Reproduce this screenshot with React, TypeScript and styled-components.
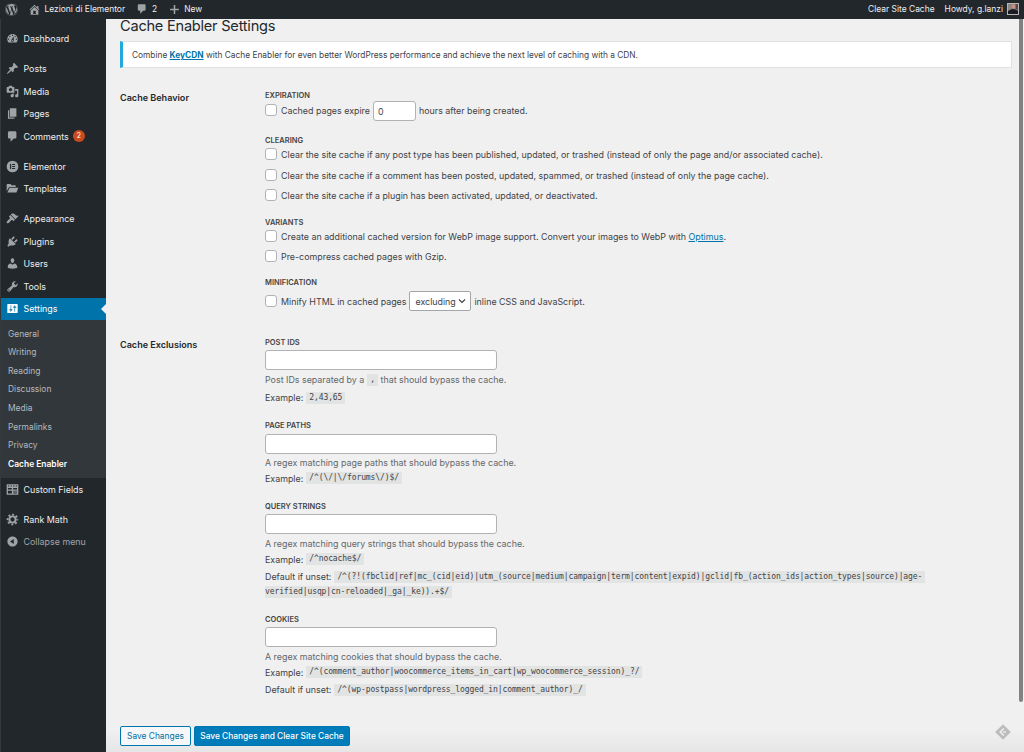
import React from "react";
import styled, { createGlobalStyle, css } from "styled-components";
import { FaWordpress } from "react-icons/fa";

const Global = createGlobalStyle`
  * { box-sizing: border-box; }
  body { margin: 0; background: #f0f0f0; overflow: hidden; }
  #root { height: 752px; }
`;

const Screen = styled.div`
  height: 752px;
  display: flex;
  flex-direction: column;
  overflow: hidden;
  position: relative;
  font-family: Inter, "Liberation Sans", sans-serif;
  font-size: 8.9px;
  color: #3f4246;
  background: #f0f0f0;
  white-space: nowrap;
`;

const AdminBar = styled.header`
  height: 19px;
  flex: none;
  display: flex;
  align-items: center;
  padding: 0 5px 1px 4px;
  background: #22272b;
  color: #eee;
  font-size: 8.45px;
`;

const BarItem = styled.div<{ $ml?: number }>`
  display: flex;
  align-items: center;
  margin-left: ${(p) => p.$ml ?? 0}px;
`;

const Spacer = styled.div`
  flex: 1;
`;

const Avatar = styled.svg`
  display: block;
  width: 12px;
  height: 12px;
  margin-left: 4px;
`;

const Body = styled.div`
  flex: 1;
  display: flex;
  min-height: 0;
`;

const Sidebar = styled.nav`
  width: 106px;
  flex: none;
  padding-top: 8.2px;
  background: #22272b;
  border-left: 1px solid #34393d;
  color: #eee;
`;

const MenuItem = styled.div<{ $gap?: number; $active?: boolean; $muted?: boolean }>`
  position: relative;
  display: flex;
  align-items: center;
  height: 22.6px;
  margin-top: ${(p) => p.$gap ?? 0}px;
  padding-left: 4.5px;
  ${(p) => p.$muted && css`color: #a0a5aa;`}
  ${(p) =>
    p.$active &&
    css`
      background: #0073aa;
      color: #fff;
      &::after {
        content: "";
        position: absolute;
        right: 0;
        top: 6px;
        border: 5.5px solid transparent;
        border-left-width: 0;
        border-right-color: #f0f0f0;
      }
    `}
`;

const IconBox = styled.span<{ $w: number; $light?: boolean; $mr?: number }>`
  display: flex;
  justify-content: center;
  width: ${(p) => p.$w}px;
  margin-right: ${(p) => p.$mr ?? 5}px;
  color: ${(p) => (p.$light ? "#fff" : "#9ea3a8")};
  svg { display: block; }
`;

const Badge = styled.span`
  margin-left: 4px;
  width: 12px;
  height: 12px;
  border-radius: 6px;
  background: #ca4a1f;
  color: #fff;
  font-size: 7px;
  line-height: 12px;
  text-align: center;
`;

const SubMenu = styled.div`
  height: 157.5px;
  padding: 4.6px 0 0 7px;
  background: #32373c;
`;

const SubItem = styled.div<{ $current?: boolean }>`
  height: 18.6px;
  line-height: 18.6px;
  font-size: 8.45px;
  color: ${(p) => (p.$current ? "#fff" : "#b4b9be")};
  font-weight: ${(p) => (p.$current ? 600 : 400)};
`;

const Content = styled.main`
  flex: 1;
  padding: 0 12px 0 14px;
  background: linear-gradient(#f0f0f0 0 710px, #e6e6e6 733px);
`;

const PageTitle = styled.h1`
  margin: 0;
  height: 16px;
  line-height: 15px;
  font-size: 14.6px;
  font-weight: 400;
  letter-spacing: -0.24px;
  color: #23282d;
`;

const Notice = styled.div`
  height: 27px;
  margin-top: 6px;
  padding-left: 9px;
  line-height: 26px;
  background: #fff;
  border: 1px solid #dfe1e3;
  border-left: 3px solid #22a8dc;
  font-size: 8.34px;
`;

const Link = styled.a<{ $bold?: boolean }>`
  color: #0073aa;
  text-decoration: underline;
  font-weight: ${(p) => (p.$bold ? 700 : 400)};
`;

const Section = styled.section<{ $mt: number }>`
  display: grid;
  grid-template-columns: 145px 1fr;
  margin-top: ${(p) => p.$mt}px;
`;

const SectionLabel = styled.div`
  height: 16px;
  line-height: 16px;
  font-size: 9.05px;
  font-weight: 600;
  color: #23282d;
`;

const Group = styled.div<{ $mt?: number }>`
  margin-top: ${(p) => p.$mt ?? 0}px;
`;

const GroupTitle = styled.div<{ $mb?: number }>`
  height: 11px;
  line-height: 11px;
  font-size: 7.5px;
  font-weight: 600;
  color: #444;
  margin-bottom: ${(p) => p.$mb ?? 0}px;
`;

const Line = styled.div<{ $h?: number; $desc?: boolean }>`
  display: flex;
  align-items: center;
  height: ${(p) => p.$h ?? 20}px;
  color: ${(p) => (p.$desc ? "#63676b" : "#3f4246")};
`;

const CheckBox = styled.span`
  width: 12px;
  height: 12px;
  flex: none;
  margin: -1px 4px 0 0;
  border: 1px solid #b0b2b4;
  border-radius: 3px;
  background: #fff;
`;

const NumberField = styled.span`
  width: 43px;
  height: 20px;
  margin: 0 3px;
  padding-left: 4px;
  line-height: 19px;
  border: 1px solid #b0b2b4;
  border-radius: 3px;
  background: #fff;
`;

const SelectField = styled.span`
  display: flex;
  align-items: center;
  justify-content: space-between;
  width: 62px;
  height: 20px;
  margin: 0 3px;
  padding: 0 4px 0 5px;
  border: 1px solid #a3a5a8;
  border-radius: 2px;
  background: #fff;
`;

const TextField = styled.div`
  width: 232px;
  height: 20px;
  border: 1px solid #b0b2b4;
  border-radius: 3px;
  background: #fff;
`;

const Code = styled.code<{ $wrapped?: boolean }>`
  display: inline-block;
  height: 12px;
  line-height: 12px;
  margin-left: ${(p) => (p.$wrapped ? 0 : 3)}px;
  padding: 0 3px 0 ${(p) => (p.$wrapped ? 0 : 3)}px;
  background: #e2e3e3;
  font-family: "DejaVu Sans Mono", monospace;
  font-size: 8px;
  letter-spacing: -0.1px;
  color: #3f4246;
`;

const Actions = styled.div`
  display: flex;
  gap: 3px;
  margin-top: 25px;
`;

const Button = styled.button<{ $primary?: boolean; $w: number }>`
  width: ${(p) => p.$w}px;
  height: 20px;
  padding: 0;
  font: inherit;
  font-size: 8.4px;
  font-weight: ${(p) => (p.$primary ? 500 : 400)};
  border-radius: 2px;
  border: 1px solid #0075b0;
  background: ${(p) => (p.$primary ? "#007cba" : "#f5f7f8")};
  color: ${(p) => (p.$primary ? "#fff" : "#0071a1")};
`;

const ScrollThumb = styled.div`
  position: absolute;
  right: 1px;
  top: 19px;
  width: 4px;
  height: 683px;
  border-radius: 0 0 2px 2px;
  background: #828282;
`;

const FloatingMark = styled.svg`
  position: absolute;
  left: 995px;
  top: 724px;
  width: 16px;
  height: 16px;
`;

const paths: Record<string, string> = {
  home: "M16 8.5l1.53 1.53-1.06 1.06L10 4.6l-6.47 6.49-1.06-1.06L10 2.5l4 4v-2h2v4zm-6-2.46l6 5.99V18H4v-5.97zM12 17v-5H8v5h4z",
  dashboard:
    "M3.76 16h12.48c1.1-1.37 1.76-3.11 1.76-5 0-4.42-3.58-8-8-8s-8 3.58-8 8c0 1.89.66 3.63 1.76 5zM10 4c.55 0 1 .45 1 1s-.45 1-1 1-1-.45-1-1 .45-1 1-1zM6 6c.55 0 1 .45 1 1s-.45 1-1 1-1-.45-1-1 .45-1 1-1zm8 0c.55 0 1 .45 1 1s-.45 1-1 1-1-.45-1-1 .45-1 1-1zm-5.37 5.55L12 7v6c0 1.1-.9 2-2 2s-2-.9-2-2c0-.57.24-1.08.63-1.45zM4 10c.55 0 1 .45 1 1s-.45 1-1 1-1-.45-1-1 .45-1 1-1zm12 0c.55 0 1 .45 1 1s-.45 1-1 1-1-.45-1-1 .45-1 1-1zm-5 3c0-.55-.45-1-1-1s-1 .45-1 1 .45 1 1 1 1-.45 1-1z",
  pin: "M10.44 3.02l1.82-1.82 6.36 6.35-1.83 1.82c-1.05-.68-2.48-.57-3.41.36l-.75.75c-.92.93-1.04 2.35-.35 3.41l-1.83 1.82-2.41-2.41-2.8 2.79c-.42.42-3.38 2.71-3.8 2.29s1.86-3.39 2.28-3.81l2.79-2.79L4.1 9.36l1.83-1.82c1.05.69 2.48.57 3.4-.36l.75-.75c.93-.92 1.05-2.35.36-3.41z",
  media:
    "M13 11V4c0-.55-.45-1-1-1h-1.67L9 1H5L3.67 3H2c-.55 0-1 .45-1 1v7c0 .55.45 1 1 1h10c.55 0 1-.45 1-1zM7 4.5c1.38 0 2.5 1.12 2.5 2.5S8.38 9.5 7 9.5 4.5 8.38 4.5 7 5.62 4.5 7 4.5zM14 6h5v10.5c0 1.38-1.12 2.5-2.5 2.5S14 17.88 14 16.5s1.12-2.5 2.5-2.5c.17 0 .34.02.5.05V9h-3V6zm-4 8.05V13h2v3.5c0 1.38-1.12 2.5-2.5 2.5S7 17.88 7 16.5 8.12 14 9.5 14c.17 0 .34.02.5.05z",
  pages: "M6 15V2h10v13H6zm-1 1h8v2H3V5h2v11z",
  comments: "M5 2h9c1.1 0 2 .9 2 2v7c0 1.1-.9 2-2 2h-2l-5 5v-5H5c-1.1 0-2-.9-2-2V4c0-1.1.9-2 2-2z",
  elementor: "M10 1a9 9 0 1 0 0 18a9 9 0 1 0 0-18zM6.2 6h1.7v8H6.2zM9.4 6h4.5v1.6H9.4zM9.4 9.2h4.5v1.6H9.4zM9.4 12.4h4.5V14H9.4z",
  templates: "M1 14V4.5C1 3.7 1.5 3 2.3 3H7l1.5 2H14c.6 0 1 .4 1 1v1.5H5zM2 16l3.6-7.3H19L16 16z",
  appearance:
    "M14.48 11.06L7.41 3.99l1.5-1.5c.5-.56 2.3-.47 3.51.32 1.21.8 1.43 1.28 2.91 2.1 1.18.64 2.45 1.26 4.45.85zm-.71.71L6.7 4.7 4.93 6.47c-.39.39-.39 1.02 0 1.41l1.06 1.06c.39.39.39 1.03 0 1.42-.6.6-1.43 1.11-2.21 1.69-.35.26-.7.53-1.01.84C1.43 14.23.4 16.08 1.4 17.07c.99 1 2.84-.03 4.18-1.36.31-.31.58-.66.85-1.02.57-.78 1.08-1.61 1.69-2.21.39-.39 1.02-.39 1.41 0l1.06 1.06c.39.39 1.02.39 1.41 0z",
  plugins:
    "M13.11 4.36L9.87 7.6 8 5.73l3.24-3.24c.35-.34 1.05-.2 1.56.32.52.51.66 1.21.31 1.55zm-8 1.77l.91-1.12 9.01 9.01-1.19.84c-.71.71-2.63 1.16-3.82 1.16H6.14L4.9 17.26c-.59.59-1.54.59-2.12 0-.59-.58-.59-1.53 0-2.12l1.24-1.24v-3.88c0-1.13.4-3.19 1.09-3.89zm7.26 3.97l3.24-3.24c.34-.35 1.04-.21 1.55.31.52.51.66 1.21.31 1.55l-3.24 3.25z",
  users:
    "M10 9.25c-2.27 0-2.73-3.44-2.73-3.44C7 4.02 7.82 2 9.97 2c2.16 0 2.98 2.02 2.71 3.81 0 0-.41 3.44-2.68 3.44zm0 2.57L12.72 10c2.39 0 4.52 2.33 4.52 4.53v2.49s-3.65 1.13-7.24 1.13c-3.65 0-7.24-1.13-7.24-1.13v-2.49c0-2.25 1.94-4.48 4.47-4.48z",
  tools:
    "M16.68 9.77c-1.34 1.34-3.3 1.67-4.95.99l-5.41 6.52c-.99.99-2.59.99-3.58 0s-.99-2.59 0-3.57l6.52-5.42c-.68-1.65-.35-3.61.99-4.95 1.28-1.28 3.12-1.62 4.72-1.06l-2.89 2.89 2.82 2.82 2.86-2.87c.53 1.58.18 3.39-1.08 4.65zM3.81 16.21c.4.39 1.04.39 1.43 0 .4-.4.4-1.04 0-1.43-.39-.4-1.03-.4-1.43 0-.39.39-.39 1.03 0 1.43z",
  settings:
    "M18 16V4c0-.55-.45-1-1-1H3c-.55 0-1 .45-1 1v12c0 .55.45 1 1 1h14c.55 0 1-.45 1-1zM8 11h1c.55 0 1 .45 1 1s-.45 1-1 1H8v1.5c0 .28-.22.5-.5.5s-.5-.22-.5-.5V13H6c-.55 0-1-.45-1-1s.45-1 1-1h1V5.5c0-.28.22-.5.5-.5s.5.22.5.5V11zm5-2h-1c-.55 0-1-.45-1-1s.45-1 1-1h1V5.5c0-.28.22-.5.5-.5s.5.22.5.5V7h1c.55 0 1 .45 1 1s-.45 1-1 1h-1v5.5c0 .28-.22.5-.5.5s-.5-.22-.5-.5V9z",
  fields: "M1 2h18v16H1zM3 7.5V10h6V7.5zM11 7.5V10h6V7.5zM3 12v4h6V12zM11 12v1.2h6V12zM11 14.8V16h6v-1.2zM3 4v1.2h2V4zM7 4v1.2h2V4zM11 4v1.2h2V4zM15 4v1.2h2V4z",
  collapse: "M10 2.16c4.33 0 7.84 3.51 7.84 7.84s-3.51 7.84-7.84 7.84S2.16 14.33 2.16 10 5.71 2.16 10 2.16zm2 11.72V6.12L6.18 9.97z",
  plus: "M8.6 2h2.8v6.6H18v2.8h-6.6V18H8.6v-6.6H2V8.6h6.6z",
};

function Icon({ name, size = 14 }: { name: string; size?: number }) {
  if (name === "gear") {
    return (
      <svg width={size} height={size} viewBox="0 0 20 20" fill="none" stroke="currentColor">
        <circle cx="10" cy="10" r="4.8" strokeWidth="3" />
        <circle cx="10" cy="10" r="7.6" strokeWidth="2.8" strokeDasharray="3 2.969" strokeDashoffset="1.5" />
      </svg>
    );
  }
  return (
    <svg width={size} height={size} viewBox="0 0 20 20" fill="currentColor" fillRule="evenodd">
      <path d={paths[name]} />
    </svg>
  );
}

type Entry = { icon: string; label: string; gap?: number; badge?: string; active?: boolean; muted?: boolean };

const mainMenu: Entry[] = [
  { icon: "dashboard", label: "Dashboard" },
  { icon: "pin", label: "Posts", gap: 7.6 },
  { icon: "media", label: "Media" },
  { icon: "pages", label: "Pages" },
  { icon: "comments", label: "Comments", badge: "2" },
  { icon: "elementor", label: "Elementor", gap: 7 },
  { icon: "templates", label: "Templates" },
  { icon: "appearance", label: "Appearance", gap: 7.2 },
  { icon: "plugins", label: "Plugins" },
  { icon: "users", label: "Users" },
  { icon: "tools", label: "Tools" },
  { icon: "settings", label: "Settings", active: true },
];

const lowerMenu: Entry[] = [
  { icon: "fields", label: "Custom Fields", gap: 0.9 },
  { icon: "gear", label: "Rank Math", gap: 7.2 },
  { icon: "collapse", label: "Collapse menu", muted: true, gap: -0.9 },
];

const subMenu = ["General", "Writing", "Reading", "Discussion", "Media", "Permalinks", "Privacy", "Cache Enabler"];

function Entries({ items }: { items: Entry[] }) {
  return (
    <>
      {items.map((e) => (
        <MenuItem key={e.label} $gap={e.gap} $active={e.active} $muted={e.muted}>
          <IconBox $w={13} $light={e.active}>
            <Icon name={e.icon} size={13} />
          </IconBox>
          {e.label}
          {e.badge && <Badge>{e.badge}</Badge>}
        </MenuItem>
      ))}
    </>
  );
}

export default function App() {
  return (
    <Screen>
      <Global />
      <AdminBar>
        <IconBox $w={14} $mr={10}><FaWordpress size={13} /></IconBox>
        <IconBox $w={13} $mr={3.5}><Icon name="home" size={13} /></IconBox>
        <BarItem>Lezioni di Elementor</BarItem>
        <BarItem $ml={10}>
          <IconBox $w={13} $mr={4}><Icon name="comments" size={12} /></IconBox>2
        </BarItem>
        <BarItem $ml={11}>
          <IconBox $w={12} $mr={4}><Icon name="plus" size={11} /></IconBox>New
        </BarItem>
        <Spacer />
        <BarItem>Clear Site Cache</BarItem>
        <BarItem $ml={10}>
          Howdy, g.lanzi
          <Avatar viewBox="0 0 12 12">
            <rect width="12" height="12" fill="#b9b4b3" />
            <rect x="1" y="1" width="10" height="10" fill="#8c8583" />
            <path d="M1 11V8l4-2 4 .5L11 8v3z" fill="#1b1b22" />
            <circle cx="6.5" cy="3.6" r="2" fill="#c98f82" />
            <path d="M8.5 1H11v6L8.8 6z" fill="#55474a" />
          </Avatar>
        </BarItem>
      </AdminBar>
      <Body>
        <Sidebar>
          <Entries items={mainMenu} />
          <SubMenu>
            {subMenu.map((s) => (
              <SubItem key={s} $current={s === "Cache Enabler"}>{s}</SubItem>
            ))}
          </SubMenu>
          <Entries items={lowerMenu} />
        </Sidebar>
        <Content>
          <PageTitle>Cache Enabler Settings</PageTitle>
          <Notice>
            Combine <Link $bold>KeyCDN</Link> with Cache Enabler for even better WordPress performance and achieve the next level of caching with a CDN.
          </Notice>
          <Section $mt={22}>
            <SectionLabel>Cache Behavior</SectionLabel>
            <div>
              <Group>
                <GroupTitle $mb={-0.5}>EXPIRATION</GroupTitle>
                <Line>
                  <CheckBox />Cached pages expire<NumberField>0</NumberField>hours after being created.
                </Line>
              </Group>
              <Group $mt={14}>
                <GroupTitle $mb={-1}>CLEARING</GroupTitle>
                <Line $h={20.5}><CheckBox />Clear the site cache if any post type has been published, updated, or trashed (instead of only the page and/or associated cache).</Line>
                <Line $h={20.5}><CheckBox />Clear the site cache if a comment has been posted, updated, spammed, or trashed (instead of only the page cache).</Line>
                <Line $h={20.5}><CheckBox />Clear the site cache if a plugin has been activated, updated, or deactivated.</Line>
              </Group>
              <Group $mt={10.5}>
                <GroupTitle $mb={-1}>VARIANTS</GroupTitle>
                <Line>
                  <CheckBox />
                  <span>Create an additional cached version for WebP image support. Convert your images to WebP with <Link>Optimus</Link>.</span>
                </Line>
                <Line><CheckBox />Pre-compress cached pages with Gzip.</Line>
              </Group>
              <Group $mt={10.5}>
                <GroupTitle $mb={3}>MINIFICATION</GroupTitle>
                <Line>
                  <CheckBox />Minify HTML in cached pages
                  <SelectField>
                    excluding
                    <svg width="8" height="8" viewBox="0 0 8 8" fill="none" stroke="#444" strokeWidth="1.2"><path d="M1 2.5l3 3 3-3" /></svg>
                  </SelectField>
                  inline CSS and JavaScript.
                </Line>
              </Group>
            </div>
          </Section>
          <Section $mt={26}>
            <SectionLabel>Cache Exclusions</SectionLabel>
            <div>
              <Group>
                <GroupTitle $mb={2}>POST IDS</GroupTitle>
                <TextField />
                <Line $desc $h={19}>Post IDs separated by a<Code>,</Code>&nbsp;that should bypass the cache.</Line>
                <Line $h={17}>Example:<Code>2,43,65</Code></Line>
              </Group>
              <Group $mt={14}>
                <GroupTitle $mb={2.5}>PAGE PATHS</GroupTitle>
                <TextField />
                <Line $desc $h={18}>A regex matching page paths that should bypass the cache.</Line>
                <Line $h={13}>Example:<Code>{"/^(\\/|\\/forums\\/)$/"}</Code></Line>
              </Group>
              <Group $mt={16}>
                <GroupTitle $mb={2}>QUERY STRINGS</GroupTitle>
                <TextField />
                <Line $desc $h={19}>A regex matching query strings that should bypass the cache.</Line>
                <Line $h={13}>Example:<Code>/^nocache$/</Code></Line>
                <Line $h={22}>Default if unset:<Code>/^(?!(fbclid|ref|mc_(cid|eid)|utm_(source|medium|campaign|term|content|expid)|gclid|fb_(action_ids|action_types|source)|age-</Code></Line>
                <Line $h={9}><Code $wrapped>verified|usqp|cn-reloaded|_ga|_ke)).+$/</Code></Line>
              </Group>
              <Group $mt={17}>
                <GroupTitle $mb={2}>COOKIES</GroupTitle>
                <TextField />
                <Line $desc $h={19}>A regex matching cookies that should bypass the cache.</Line>
                <Line $h={13}>Example:<Code>/^(comment_author|woocommerce_items_in_cart|wp_woocommerce_session)_?/</Code></Line>
                <Line $h={22}>Default if unset:<Code>/^(wp-postpass|wordpress_logged_in|comment_author)_/</Code></Line>
              </Group>
            </div>
          </Section>
          <Actions>
            <Button $w={71}>Save Changes</Button>
            <Button $primary $w={156}>Save Changes and Clear Site Cache</Button>
          </Actions>
        </Content>
      </Body>
      <ScrollThumb />
      <FloatingMark viewBox="0 0 16 16">
        <path d="M8 .8L15.4 8 8 15.2.6 8z" fill="#bcbcbc" stroke="#bcbcbc" strokeLinejoin="round" />
        <path d="M8.8 4.5L5.2 8l3.6 3.5M8.3 8h2.4" fill="none" stroke="#f0f0f0" strokeWidth="1.5" />
      </FloatingMark>
    </Screen>
  );
}
